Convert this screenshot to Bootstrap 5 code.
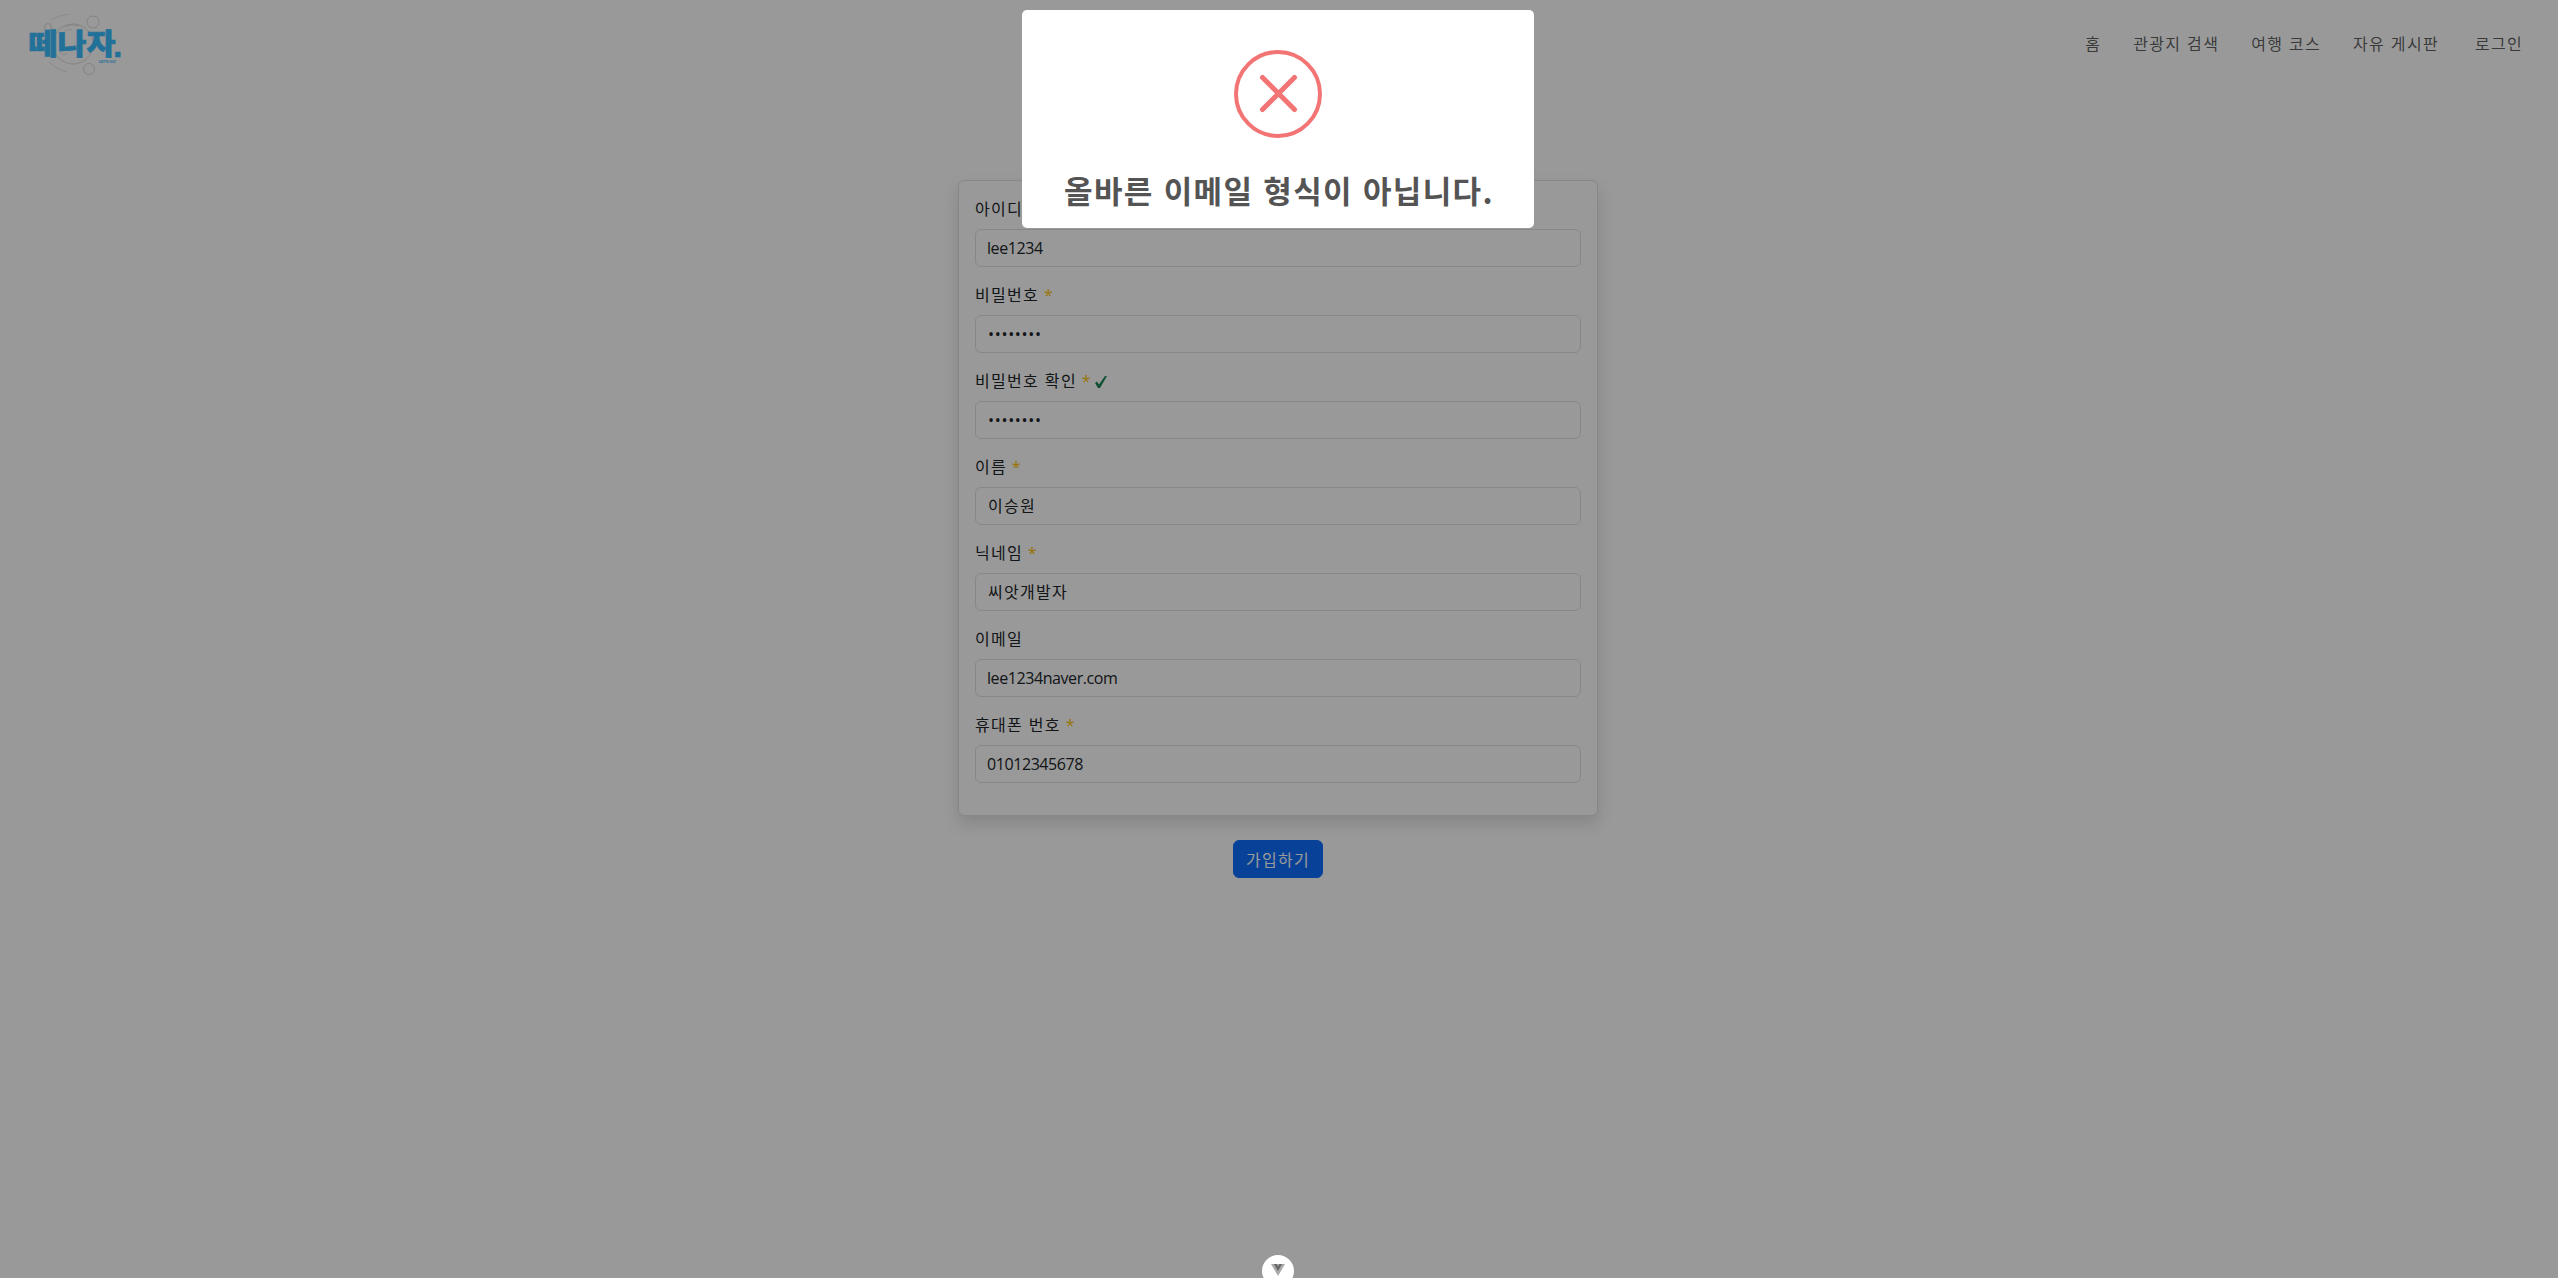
<!DOCTYPE html>
<html lang="ko">
<head>
<meta charset="utf-8">
<meta name="viewport" content="width=device-width, initial-scale=1">
<title>떼나자 - 회원가입</title>
<link href="https://cdn.jsdelivr.net/npm/bootstrap@5.3.0/dist/css/bootstrap.min.css" rel="stylesheet">
<style>
  body { font-family: "Open Sans", "Noto Sans CJK KR", sans-serif; padding-right: 2px; overflow: hidden; }
  .ko { letter-spacing: 1.3px; font-family: "Noto Sans CJK KR", sans-serif; font-weight: 400; }
  .top-bar { height: 86px; padding: 0 33px 0 29px; }
  .menu-row { gap: 32px; }
  .menu-row .nav-link { white-space: nowrap; font-size: 16px; color: rgba(0,0,0,.65); }
  .join-wrap { width: 640px; margin-top: 94px; }
  .join-card { padding: 16px; border-color: #dee2e6; }
  .form-label { display: block; line-height: 22px; height: 24px; white-space: nowrap; }
  .form-control { height: 38px; letter-spacing: -.42px; border-color: #dee2e6; padding-left: 11px; }
  .form-control.ko { letter-spacing: 1.3px; padding: 5px 12px 7px; }
  .form-control[type="password"] { letter-spacing: .7px; padding-left: 12px; }
  .need { color: #ffc107; font-family: "Open Sans", sans-serif; letter-spacing: 0; margin-left: -1px; }
  .dim { position: fixed; inset: 0; background: rgba(0,0,0,.4); z-index: 1040; padding: 10px 2px 0 0; }
  .alert-box { width: 512px; height: 218px; background: #fff; border-radius: 5px; padding-top: 40px; }
  .alert-title { color: #545454; font: 700 31px/40px "Noto Sans CJK KR", sans-serif; margin: 32px 0 0 2px; white-space: nowrap; letter-spacing: 1.35px; }
  .dev-toggle { position: fixed; z-index: 1050; left: 1262px; bottom: -9px; width: 32px; height: 32px; background: #fff; border-radius: 50%; }
</style>
<script src="https://cdn.jsdelivr.net/npm/bootstrap@5.3.0/dist/js/bootstrap.bundle.min.js"></script>
</head>
<body>
<nav class="top-bar d-flex align-items-center justify-content-between">
  <a href="#" aria-label="떼나자">
    <svg width="96" height="76" viewBox="0 0 96 76" class="d-block">
      <g fill="none" stroke="#000" stroke-opacity=".14">
        <circle cx="44" cy="39" r="20"/><circle cx="64" cy="17" r="6"/><circle cx="19" cy="22" r="3.5"/><circle cx="60" cy="64" r="5.500"/>
        <path d="M36 22l6-2 8 1M35 26l8-2M36 44a3 3 0 1 0 2 3M20 57q8 8 18 10M22 15q8-5 18-6" stroke-opacity=".1"/>
      </g>
      <g fill="#3abcff" stroke="#3abcff" font-weight="900">
        <text transform="translate(-.5 49.500)" font-family="Noto Sans CJK KR" font-size="29" textLength="87" lengthAdjust="spacingAndGlyphs" stroke-width=".6">떼나자</text>
        <text x="84" y="52" font-family="Liberation Sans" font-size="34" stroke-width=".5">.</text>
      </g>
      <text x="70" y="58" font-family="Liberation Sans" font-size="4" font-weight="700" textLength="17" fill="#3abcff">LET'S GO!</text>
    </svg>
  </a>
  <ul class="nav menu-row ko">
    <li><a class="nav-link p-0" href="#">홈</a></li>
    <li><a class="nav-link p-0" href="#">관광지 검색</a></li>
    <li><a class="nav-link p-0" href="#">여행 코스</a></li>
    <li><a class="nav-link p-0" href="#">자유 게시판</a></li>
    <li><a class="nav-link p-0 ms-1" href="#">로그인</a></li>
  </ul>
</nav>
<main class="join-wrap mx-auto">
  <form class="text-center">
    <div class="card join-card shadow text-start">
      <div class="mb-3"><label class="form-label ko">아이디 <span class="need">*</span></label><input class="form-control" value="lee1234"></div>
      <div class="mb-3"><label class="form-label ko">비밀번호 <span class="need">*</span></label><input type="password" class="form-control" value="abcd1234"></div>
      <div class="mb-3"><label class="form-label ko">비밀번호 확인 <span class="need">*</span><svg width="12" height="14" viewBox="0 0 12 14" class="ms-1"><path d="M0 7l2-1.500 2 3L10 0h2L5 12H3z" fill="#198754"/></svg></label><input type="password" class="form-control" value="abcd1234"></div>
      <div class="mb-3"><label class="form-label ko">이름 <span class="need">*</span></label><input class="form-control ko" value="이승원"></div>
      <div class="mb-3"><label class="form-label ko">닉네임 <span class="need">*</span></label><input class="form-control ko" value="씨앗개발자"></div>
      <div class="mb-3"><label class="form-label ko">이메일</label><input class="form-control" value="lee1234naver.com"></div>
      <div class="mb-3"><label class="form-label ko">휴대폰 번호 <span class="need">*</span></label><input class="form-control" value="01012345678"></div>
    </div>
    <button type="button" class="btn btn-primary ko mt-4">가입하기</button>
  </form>
</main>
<div class="dim">
  <div class="alert-box mx-auto text-center" role="dialog">
    <svg width="88" height="88" viewBox="0 0 88 88" class="d-block mx-auto" fill="none" stroke="#f27474">
      <circle cx="44" cy="44" r="42" stroke-width="4"/>
      <path d="M28.500 27.500l32 32M60.500 27.500l-32 32" stroke-width="5" stroke-linecap="round"/>
    </svg>
    <h2 class="alert-title">올바른 이메일 형식이 아닙니다.</h2>
  </div>
</div>
<div class="dev-toggle d-flex justify-content-center">
  <svg width="14" height="13" viewBox="0 0 14 13" class="mt-2"><path d="M0 1h14L7 13z" fill="#aaa"/><path d="M3 1h2.500L7 3.500 8.500 1H11L7 8z" fill="#666"/></svg>
</div>
</body>
</html>
